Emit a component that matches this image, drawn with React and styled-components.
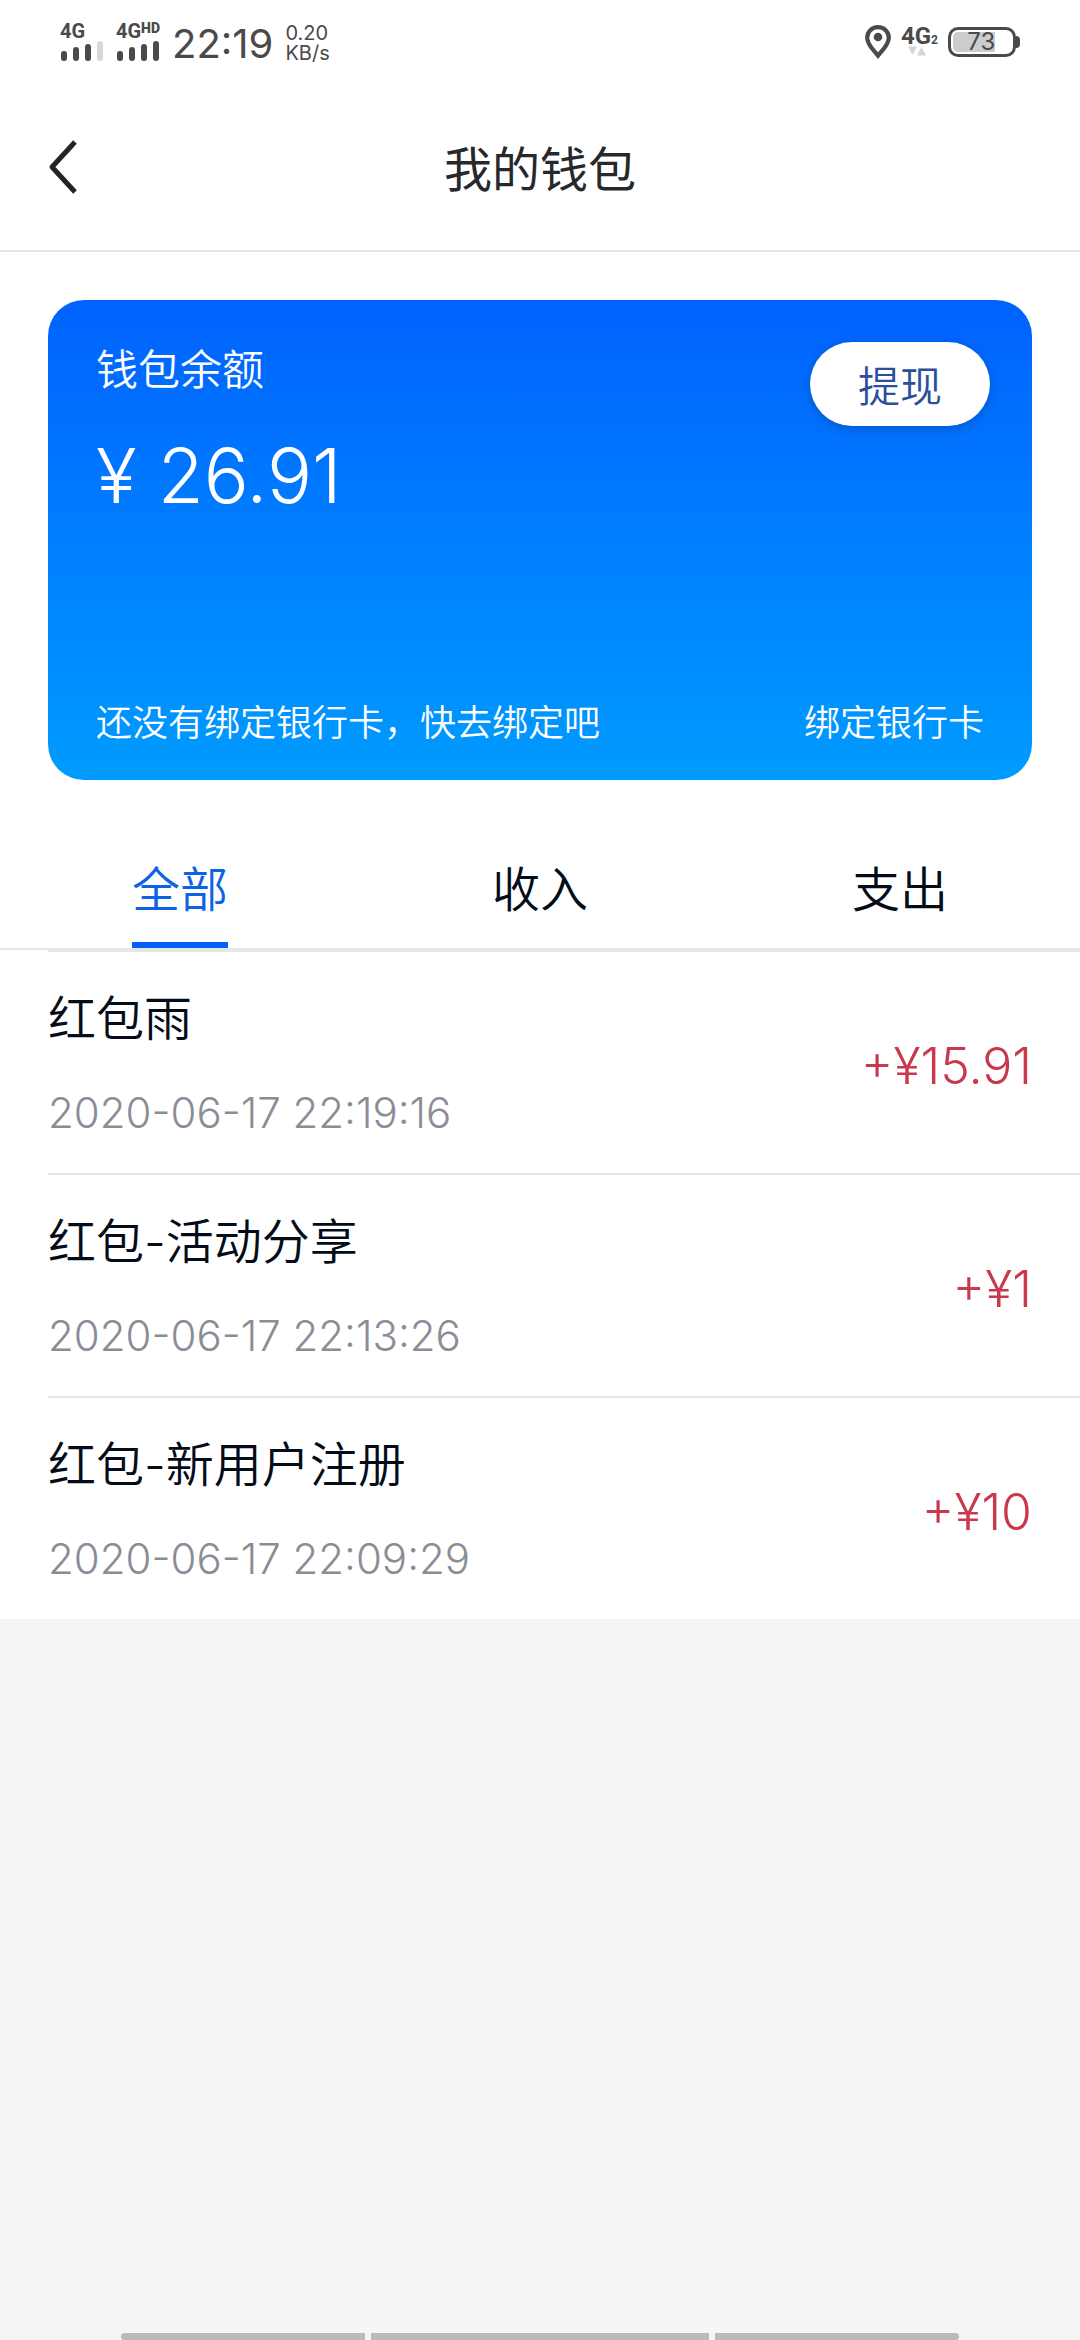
import React, { useState } from 'react';
import styled, { createGlobalStyle } from 'styled-components';

const GlobalStyle = createGlobalStyle`
  * {
    box-sizing: border-box;
  }

  body {
    margin: 0;
    background-color: #f5f5f5;
    color: #040c18;
    font-family: Inter, 'Noto Sans CJK SC', sans-serif;
    font-weight: 350;
  }

  button {
    margin: 0;
    padding: 0;
    border: 0;
    background: transparent;
    color: inherit;
    font: inherit;
    cursor: pointer;
  }
`;

const Page = styled.div`
  display: flex;
  flex-direction: column;
  min-height: 100vh;
`;

const StatusBar = styled.div`
  display: flex;
  justify-content: space-between;
  align-items: center;
  height: 84px;
  padding: 0 60px;
  background-color: #fff;
  color: #4a4a4a;
`;

const StatusGroup = styled.div`
  display: flex;
  align-items: center;
  gap: ${({ $gap }) => $gap}px;
`;

const Signal = styled.div`
  display: flex;
  flex-direction: column;
  gap: 2px;
`;

const NetworkLabel = styled.span`
  display: flex;
  align-items: flex-start;
  font-family: Roboto, sans-serif;
  font-size: ${({ $large }) => ($large ? 24 : 20)}px;
  font-weight: 700;
  line-height: 16px;

  sup {
    font-size: 14px;
    font-weight: 900;
    line-height: 10px;
  }

  sub {
    align-self: flex-end;
    font-size: 12px;
    line-height: 8px;
  }
`;

const Clock = styled.time`
  padding-top: 4px;
  font-size: 40px;
  font-weight: 400;
  line-height: 48px;
`;

const Speed = styled.div`
  display: flex;
  flex-direction: column;
  padding-top: 2px;
  font-size: 20px;
  font-weight: 400;
  line-height: 20px;
`;

const Battery = styled.div`
  display: flex;
  align-items: center;

  &:after {
    content: '';
    width: 4px;
    height: 12px;
    border-radius: 0 4px 4px 0;
    background-color: #4a4a4a;
  }
`;

const BatteryBody = styled.div`
  width: 68px;
  height: 30px;
  padding: 2px;
  border: 3px solid #4a4a4a;
  border-radius: 10px;
`;

const BatteryLevel = styled.div`
  height: 20px;
  border-radius: 5px 0 0 5px;
  background-color: #ccc;
  font-size: 24px;
  font-weight: 400;
  line-height: 20px;
  text-align: right;
`;

const Header = styled.header`
  display: grid;
  grid-template-columns: 96px 1fr 96px;
  align-items: center;
  height: 168px;
  border-bottom: 2px solid #e5e5e5;
  background-color: #fff;

  h1 {
    margin: 0;
    padding-top: 6px;
    color: #26282b;
    font-size: 48px;
    font-weight: 400;
    line-height: 72px;
    text-align: center;
  }
`;

const BackButton = styled.button`
  display: flex;
  height: 96px;
  padding-left: 48px;
  align-items: center;
`;

const Wallet = styled.section`
  padding: 48px;
  background-color: #fff;
`;

const Card = styled.div`
  display: flex;
  flex-direction: column;
  justify-content: space-between;
  min-height: 480px;
  padding: 42px 42px 32px 48px;
  border-radius: 36px;
  background: linear-gradient(#0062ff, #009bff);
  color: #fff;
`;

const CardTop = styled.div`
  display: flex;
  justify-content: space-between;
  align-items: flex-start;
`;

const BalanceLabel = styled.div`
  font-size: 42px;
  line-height: 56px;
`;

const Balance = styled.div`
  margin-top: 28px;
  font-size: 75px;
  font-weight: 300;
  line-height: 100px;
`;

const WithdrawButton = styled.button`
  width: 180px;
  height: 84px;
  padding-bottom: 2px;
  border-radius: 42px;
  background-color: #fff;
  box-shadow: 0 3px 12px rgba(0, 0, 0, 0.2);
  color: #2a4f9c;
  font-size: 42px;
`;

const CardBottom = styled.div`
  display: flex;
  justify-content: space-between;
  padding-right: 6px;
  font-size: 36px;
  line-height: 50px;

  a {
    color: inherit;
    text-decoration: none;
  }
`;

const Tabs = styled.div`
  display: flex;
  border-bottom: 2px solid #e5e6e8;
  background-color: #fff;
`;

const Tab = styled.button`
  display: flex;
  flex: 1;
  justify-content: center;
  color: ${({ $active }) => ($active ? '#0d62e6' : 'inherit')};
  font-size: 48px;
  line-height: 104px;

  span {
    height: 120px;
    padding-top: 10px;
    border-bottom: 6px solid ${({ $active }) => ($active ? '#0062f5' : 'transparent')};
  }
`;

const RecordList = styled.ul`
  margin: 0;
  padding: 0 0 0 48px;
  background-color: #fff;
  list-style: none;
`;

const Record = styled.li`
  display: flex;
  justify-content: space-between;
  align-items: center;
  min-height: 223px;
  padding: 6px 48px 0 0;
  border-top: 2px solid #e5e6e8;
`;

const RecordInfo = styled.div`
  display: flex;
  flex-direction: column;
  gap: 34px;

  h2 {
    margin: 0;
    font-size: 48px;
    font-weight: 350;
    line-height: 60px;
  }

  time {
    color: #8a8d96;
    font-size: 42px;
    line-height: 60px;
  }
`;

const Amount = styled.div`
  color: #c9384c;
  font-size: 50px;
  line-height: 60px;
`;

const GestureBar = styled.div`
  display: flex;
  gap: 6px;
  margin-top: auto;
  padding: 0 121px;
`;

const GestureSegment = styled.span`
  flex: ${({ $grow }) => $grow};
  height: 7px;
  background-color: #bababa;

  &:first-child {
    border-radius: 4px 0 0 4px;
  }

  &:last-child {
    border-radius: 0 4px 4px 0;
  }
`;

const TABS = [
  { id: 'all', label: '全部' },
  { id: 'income', label: '收入' },
  { id: 'expense', label: '支出' },
];

const RECORDS = [
  { title: '红包雨', time: '2020-06-17 22:19:16', amount: 15.91 },
  { title: '红包-活动分享', time: '2020-06-17 22:13:26', amount: 1 },
  { title: '红包-新用户注册', time: '2020-06-17 22:09:29', amount: 10 },
];

const SignalBars = ({ level }) => (
  <svg width="44" height="20" viewBox="0 0 44 20" aria-hidden="true">
    {[10, 14, 17, 20].map((height, i) => (
      <rect
        key={height}
        x={1 + i * 12}
        y={20 - height}
        width="6"
        height={height}
        rx="3"
        fill={i < level ? '#4a4a4a' : '#d8d8d8'}
      />
    ))}
  </svg>
);

const PinIcon = () => (
  <svg width="26" height="34" viewBox="0 0 26 34" aria-hidden="true">
    <path
      d="M13 2.2C6.9 2.2 2.2 6.8 2.2 12.7c0 3.6 2 6.8 4.3 10.1L13 30.6l6.500-7.800c2.300-3.300 4.300-6.500 4.300-10.100C23.800 6.800 19.100 2.200 13 2.200z"
      fill="none"
      stroke="#4a4a4a"
      strokeWidth="4.200"
    />
    <circle cx="13" cy="12" r="4.300" fill="#4a4a4a" />
  </svg>
);

const DataArrows = () => (
  <svg width="34" height="10" viewBox="0 0 34 10" aria-hidden="true">
    <path d="M7 0.500h9l-4.500 8.500z M16 9.500h9l-4.500-8.500z" fill="#d5d5d5" />
  </svg>
);

const BackIcon = () => (
  <svg width="32" height="56" viewBox="0 0 32 56" aria-hidden="true">
    <path
      d="M27 3L4 28l23 25"
      fill="none"
      stroke="#232426"
      strokeWidth="5"
      strokeLinejoin="round"
    />
  </svg>
);

const App = () => {
  const [activeTab, setActiveTab] = useState('all');
  const records = activeTab === 'expense' ? [] : RECORDS;

  return (
    <Page>
      <GlobalStyle />
      <StatusBar>
        <StatusGroup $gap={12}>
          <Signal>
            <NetworkLabel>4G</NetworkLabel>
            <SignalBars level={3} />
          </Signal>
          <Signal>
            <NetworkLabel>
              4G<sup>HD</sup>
            </NetworkLabel>
            <SignalBars level={4} />
          </Signal>
          <Clock>22:19</Clock>
          <Speed>
            <span>0.20</span>
            <span>KB/s</span>
          </Speed>
        </StatusGroup>
        <StatusGroup $gap={10}>
          <PinIcon />
          <Signal>
            <NetworkLabel $large>
              4G<sub>2</sub>
            </NetworkLabel>
            <DataArrows />
          </Signal>
          <Battery>
            <BatteryBody>
              <BatteryLevel style={{ width: '73%' }}>73</BatteryLevel>
            </BatteryBody>
          </Battery>
        </StatusGroup>
      </StatusBar>

      <Header>
        <BackButton type="button" aria-label="返回">
          <BackIcon />
        </BackButton>
        <h1>我的钱包</h1>
      </Header>

      <Wallet>
        <Card>
          <CardTop>
            <div>
              <BalanceLabel>钱包余额</BalanceLabel>
              <Balance>¥ 26.91</Balance>
            </div>
            <WithdrawButton type="button">提现</WithdrawButton>
          </CardTop>
          <CardBottom>
            <span>还没有绑定银行卡，快去绑定吧</span>
            <a href="#bind">绑定银行卡</a>
          </CardBottom>
        </Card>
      </Wallet>

      <Tabs role="tablist">
        {TABS.map(({ id, label }) => (
          <Tab
            key={id}
            type="button"
            role="tab"
            aria-selected={id === activeTab}
            $active={id === activeTab}
            onClick={() => setActiveTab(id)}
          >
            <span>{label}</span>
          </Tab>
        ))}
      </Tabs>

      <RecordList>
        {records.map(({ title, time, amount }) => (
          <Record key={time}>
            <RecordInfo>
              <h2>{title}</h2>
              <time>{time}</time>
            </RecordInfo>
            <Amount>+¥{amount}</Amount>
          </Record>
        ))}
      </RecordList>

      <GestureBar>
        <GestureSegment $grow={244} />
        <GestureSegment $grow={338} />
        <GestureSegment $grow={244} />
      </GestureBar>
    </Page>
  );
};

export default App;
